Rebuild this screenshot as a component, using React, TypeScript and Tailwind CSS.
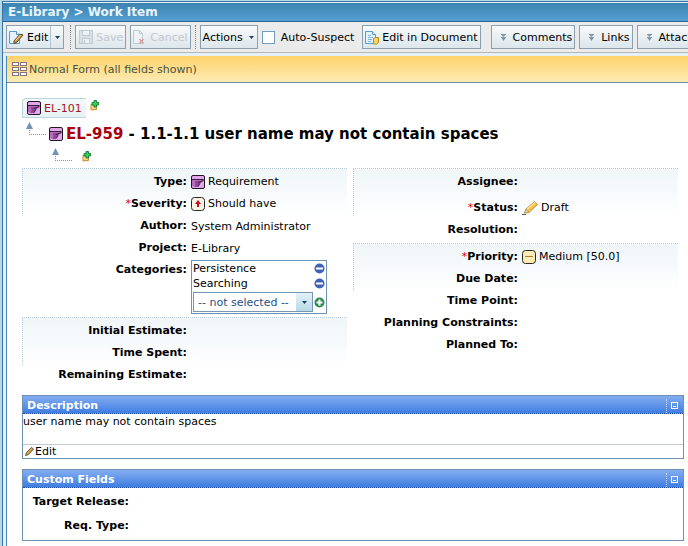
import type { ReactNode } from "react";

function RequirementIcon() {
  return (
    <svg width="14" height="14" viewBox="0 0 14 14" className="shrink-0" aria-hidden="true">
      <rect x="0.5" y="0.5" width="13" height="13" rx="1.500" fill="#e3a6ea" stroke="#1f1626" />
      <path d="M1 4.500h11.500v2L8.500 8v2.500L6 12H3L1 10.500z" fill="#b868bd" />
      <path d="M1 4.500h11.500M12.500 5.500L7 7.500" stroke="#3a1a40" />
      <path d="M4 7h5.500M4.500 9h4.500M4 11h3.500" stroke="#4d2152" strokeWidth="0.900" />
      <path d="M9.500 7.500L7 11.500" stroke="#4d2152" strokeWidth="0.900" />
    </svg>
  );
}

function AddItemIcon() {
  return (
    <svg width="9" height="11" viewBox="0 0 9 11" className="shrink-0" aria-hidden="true">
      <path d="M1 4.500h5.500v5H5L1 10z" fill="#f6d77c" stroke="#c58a35" />
      <path d="M4 0.500h2.500v2h2v2.500h-2v2H4V5H2V2.500h2z" fill="#3ccb5c" stroke="#0b7d32" strokeWidth="0.900" />
    </svg>
  );
}

function TreeConnector() {
  return (
    <svg width="21" height="14" viewBox="0 0 21 14" className="shrink-0" aria-hidden="true">
      <path d="M3.500 0L7 7H0z" fill="#7292b8" />
      <path d="M3.500 8v5" stroke="#8294a8" strokeDasharray="1 1" />
      <path d="M3 12.500h17" stroke="#8294a8" strokeDasharray="1 1" />
    </svg>
  );
}

function PageShape() {
  return (
    <>
      <path d="M0.500 1.500h7l3 3v9h-10z" fill="#e3f3fd" stroke="#5b9bca" />
      <path d="M7.500 1.500v3h3" fill="#fff" stroke="#5b9bca" />
    </>
  );
}

function EditPageIcon() {
  return (
    <svg width="15" height="15" viewBox="0 0 15 15" className="shrink-0" aria-hidden="true">
      <PageShape />
      <path d="M5 11l6-7 3 1-6 7-3 1.500z" fill="#d99b3f" stroke="#4b3517" strokeWidth="0.900" />
      <path d="M6.500 10.500l5-5.500" stroke="#f6d68c" />
    </svg>
  );
}

function SaveIcon() {
  return (
    <svg width="14" height="14" viewBox="0 0 14 14" className="shrink-0" aria-hidden="true">
      <rect x="0.500" y="0.500" width="13" height="13" fill="#d9e1e5" stroke="#c0cbd1" />
      <rect x="3.500" y="0.500" width="7" height="5" fill="#eef2f4" stroke="#c0cbd1" />
      <rect x="3.500" y="8.500" width="7" height="5" fill="#eef2f4" stroke="#c0cbd1" />
      <path d="M5.500 10v3" stroke="#b7c3ca" />
    </svg>
  );
}

function CancelIcon() {
  return (
    <svg width="14" height="15" viewBox="0 0 14 15" className="shrink-0" aria-hidden="true">
      <path d="M1.500 0.500h6l3 3v10h-9z" fill="#eef2f4" stroke="#bccad2" />
      <path d="M7.500 0.500v3h3" fill="none" stroke="#bccad2" />
      <path d="M7.500 9l4 4.500M11.500 9l-4 4.500" stroke="#dc9ca4" strokeWidth="1.500" />
    </svg>
  );
}

function DocumentIcon() {
  return (
    <svg width="15" height="15" viewBox="0 0 15 15" className="shrink-0" aria-hidden="true">
      <PageShape />
      <path d="M3 5.500h3M3 7.500h5M3 9.500h4M3 11.500h3" stroke="#7db7dd" />
      <path d="M8.500 8.500l2-1h3v5l-2 1.500h-3z" fill="#fbd75c" stroke="#b88a1c" />
    </svg>
  );
}

function FormIcon() {
  return (
    <svg width="15" height="14" viewBox="0 0 15 14" className="shrink-0" aria-hidden="true">
      <g fill="#fff" stroke="#84727a">
        <rect x="0.500" y="0.500" width="6" height="3" />
        <rect x="8.500" y="0.500" width="6" height="3" />
        <rect x="0.500" y="5.500" width="6" height="3" />
        <rect x="8.500" y="5.500" width="6" height="3" />
        <rect x="0.500" y="10.500" width="6" height="3" />
        <rect x="8.500" y="10.500" width="6" height="3" />
      </g>
    </svg>
  );
}

function JumpIcon() {
  return (
    <svg width="5" height="7" viewBox="0 0 5 7" className="shrink-0" aria-hidden="true">
      <path d="M0 0.500h5M0 3.500h5" stroke="#8296aa" />
      <path d="M0.500 1h4l-2 2zM0.500 4h4l-2 3z" fill="#8296aa" />
    </svg>
  );
}

function ArrowDown() {
  return (
    <svg width="5" height="3" viewBox="0 0 5 3" className="shrink-0" aria-hidden="true">
      <path d="M0 0h5L2.500 3z" fill="#1d3f57" />
    </svg>
  );
}

function SeverityIcon() {
  return (
    <svg width="14" height="14" viewBox="0 0 14 14" className="shrink-0" aria-hidden="true">
      <rect x="0.500" y="0.500" width="13" height="13" rx="3" fill="#fbf3e6" stroke="#2b2622" />
      <path d="M7 3l3 4H8v3H6V7H4z" fill="#c60f1c" />
    </svg>
  );
}

function PriorityIcon() {
  return (
    <svg width="14" height="14" viewBox="0 0 14 14" className="shrink-0" aria-hidden="true">
      <rect x="0.500" y="0.500" width="13" height="13" rx="3" fill="#fdebb4" stroke="#2b2622" />
      <path d="M3 6.500h8" stroke="#a8823c" />
    </svg>
  );
}

function DraftIcon() {
  return (
    <svg width="16" height="14" viewBox="0 0 16 14" className="shrink-0" aria-hidden="true">
      <path d="M0 13.500h4" stroke="#6b5a43" />
      <path d="M2.500 12l1.500-4 8.500-7.500 3 3-8.500 8z" fill="#f4c04a" stroke="#b98127" strokeWidth="0.800" />
      <path d="M5 8.500l8-7" stroke="#fce6a0" strokeWidth="1.500" />
      <path d="M2.500 12L4 8l3 3.500z" fill="#efdcb8" stroke="#8a6a3a" strokeWidth="0.500" />
    </svg>
  );
}

function SmallPencilIcon() {
  return (
    <svg width="9" height="9" viewBox="0 0 9 9" className="shrink-0" aria-hidden="true">
      <path d="M0.500 8.500l1-3 5-5 2 1.500-5 5.500z" fill="#d9a55a" stroke="#5f431f" strokeWidth="0.900" />
    </svg>
  );
}

function RoundIcon({ plus = false }: { plus?: boolean }) {
  return (
    <svg width="11" height="11" viewBox="0 0 11 11" className="shrink-0" aria-hidden="true">
      <circle cx="5.500" cy="5.500" r="5" fill={plus ? "#2f8a50" : "#3f63bd"} />
      <path d={plus ? "M2.500 5.500h6M5.500 2.500v6" : "M2 5.500h7"} stroke="#fff" strokeWidth="2" />
    </svg>
  );
}

const buttonFace =
  "flex h-6 shrink-0 items-center border border-[#8b9fae] bg-linear-to-b from-[#f7fafb] to-[#dce6eb]";

function Divider() {
  return <span className="h-6 shrink-0 border-l border-dotted border-[#7c8890]" />;
}

function JumpButton({ children }: { children: ReactNode }) {
  return (
    <button type="button" className={`${buttonFace} gap-[7px] pr-0.5 pl-[9px]`}>
      <JumpIcon />
      {children}
    </button>
  );
}

function Group({ children, className = "" }: { children: ReactNode; className?: string }) {
  return (
    <div className={`relative isolate pt-[3px] ${className}`}>
      <span className="absolute inset-x-0 top-0 -z-10 h-12 border-t border-l border-dotted border-[#b9ced8] bg-linear-to-b from-[#eff5f8] to-white" />
      <dl>{children}</dl>
    </div>
  );
}

function Field({
  label,
  required = false,
  plain = false,
  className = "",
  children,
}: {
  label: string;
  required?: boolean;
  plain?: boolean;
  className?: string;
  children?: ReactNode;
}) {
  return (
    <div className={`flex min-h-[22px] items-start gap-1 ${className}`}>
      <dt className="w-[165px] shrink-0 text-right leading-[22px] font-bold">
        {required && <span className="font-normal text-[#e00000]">*</span>}
        {label}:
      </dt>
      <dd className={`flex items-center gap-[3px] ${plain ? "pt-0.5 leading-5" : "leading-[22px]"}`}>{children}</dd>
    </div>
  );
}

function Panel({ title, children }: { title: string; children: ReactNode }) {
  return (
    <section className="border border-[#6f8fb5]">
      <header className="flex h-[18px] items-center justify-between border-b border-dotted border-[#1c4c9c] bg-linear-to-b from-[#84adf0] to-[#3f7de2] pt-0.5 pr-[5px] pl-1">
        <h2 className="font-bold text-white">{title}</h2>
        <button
          type="button"
          aria-label={`Collapse ${title}`}
          className="flex h-3.5 items-center border-l border-dotted border-[#c5daf8] pl-1"
        >
          <svg width="7" height="7" viewBox="0 0 7 7" aria-hidden="true">
            <rect x="0.500" y="0.500" width="6" height="6" fill="none" stroke="#fff" />
            <path d="M2 4.500h3" stroke="#fff" />
          </svg>
        </button>
      </header>
      {children}
    </section>
  );
}

export default function App() {
  return (
    <div className="flex min-h-screen flex-col overflow-hidden bg-[#b4daea] pt-px pl-0.5 font-['DejaVu_Sans',Verdana,sans-serif] text-[11px] leading-[15px] whitespace-nowrap text-black">
      <div className="flex grow flex-col border-t border-l border-[#3b71a3] bg-[#e4f0f6] pt-px">
        <header className="flex h-[19px] items-center border-b border-[#2a6693] bg-linear-to-b from-[#3b83ae] to-[#559ed2] pl-[5px]">
          <h1 className="text-xs leading-[15px] font-bold text-[#e8f6ff]">E-Library &gt; Work Item</h1>
        </header>

        <div className="flex h-[31px] items-center border-b border-[#b6b6b6] bg-[#ebebeb] pl-[3px]">
          <div className={buttonFace}>
            <button type="button" className="flex h-full items-center gap-[3px] pr-0.5 pl-0.5">
              <EditPageIcon />
              Edit
            </button>
            <button
              type="button"
              aria-label="More edit options"
              className="flex h-full w-[13px] items-center justify-center border-l border-[#b4c2cc]"
            >
              <ArrowDown />
            </button>
          </div>
          <div className="ml-1.5 flex items-center gap-1">
            <Divider />
            <button type="button" disabled className={`${buttonFace} gap-[3px] pr-0.5 pl-[3px] text-[#c3c8cb]`}>
              <SaveIcon />
              Save
            </button>
            <button type="button" disabled className={`${buttonFace} gap-1 pr-0.5 pl-px text-[#c3c8cb]`}>
              <CancelIcon />
              Cancel
            </button>
            <Divider />
            <button type="button" className={`${buttonFace} gap-1.5 pr-[3px] pl-0.5`}>
              Actions
              <ArrowDown />
            </button>
            <label className="flex items-center gap-1.5">
              <input
                type="checkbox"
                className="size-[13px] shrink-0 appearance-none border border-[#6f9bbd] bg-white checked:bg-[#6f9bbd]"
              />
              Auto-Suspect
            </label>
          </div>
          <div className="ml-2 flex items-center gap-2.5">
            <button type="button" className={`${buttonFace} gap-0.5 px-0.5`}>
              <DocumentIcon />
              Edit in Document
            </button>
            <div className="flex gap-1">
              <JumpButton>Comments</JumpButton>
              <JumpButton>Links</JumpButton>
              <JumpButton>Attachments</JumpButton>
            </div>
          </div>
        </div>

        <div className="mt-[3px] ml-[3px] flex grow flex-col border-l border-[#4a86b8] bg-white">
          <div className="flex h-[27px] items-center gap-0.5 border-b border-[#6e8f9c] bg-linear-to-b from-[#fdd268] to-[#feebb2] pl-[5px] text-[#48503c]">
            <FormIcon />
            Normal Form (all fields shown)
          </div>

          <main className="pt-[15px] pr-1 pb-1.5 pl-[15px]">
            <div className="flex items-start gap-1">
              <a
                href="#el-101"
                className="flex h-5 items-center gap-[3px] rounded-tl-sm border border-r-0 border-[#bcd4de] bg-linear-to-b from-[#f4f9fa] to-[#e8f1f4] pr-1 pl-1 text-[#a8141c]"
              >
                <RequirementIcon />
                EL-101
              </a>
              <button type="button" aria-label="Add child to EL-101" className="mt-0.5">
                <AddItemIcon />
              </button>
            </div>
            <div className="flex h-[30px] items-start gap-0.5 pt-1 pl-1">
              <TreeConnector />
              <div className="flex items-center gap-[3px] pt-0.5">
                <RequirementIcon />
                <h2 className="text-[15px] leading-5 font-bold">
                  <span className="text-[#a8000c]">EL-959</span> - 1.1-1.1 user name may not contain spaces
                </h2>
              </div>
            </div>
            <div className="flex h-5 items-start gap-[9px] pl-[30px]">
              <TreeConnector />
              <button type="button" aria-label="Add child to EL-959" className="mt-[3px]">
                <AddItemIcon />
              </button>
            </div>

            <div className="grid grid-cols-2 gap-1.5 pr-1.5">
              <div className="space-y-[3px]">
                <Group>
                  <Field label="Type">
                    <RequirementIcon />
                    Requirement
                  </Field>
                  <Field label="Severity" required>
                    <SeverityIcon />
                    Should have
                  </Field>
                  <Field label="Author" plain>
                    System Administrator
                  </Field>
                  <Field label="Project" plain>
                    E-Library
                  </Field>
                  <Field label="Categories">
                    <div className="mt-px w-[136px] border border-[#6f93b8] bg-white px-px pb-px leading-[15px]">
                      <div className="flex items-center justify-between">
                        Persistence
                        <button type="button" aria-label="Remove Persistence">
                          <RoundIcon />
                        </button>
                      </div>
                      <div className="flex items-center justify-between">
                        Searching
                        <button type="button" aria-label="Remove Searching">
                          <RoundIcon />
                        </button>
                      </div>
                      <div className="mt-px flex items-center justify-between">
                        <div className="relative">
                          <select
                            aria-label="Add category"
                            className="h-5 w-[120px] appearance-none border border-[#7796b4] bg-white pl-1 text-[#1f4f82]"
                          >
                            <option>-- not selected --</option>
                          </select>
                          <span className="pointer-events-none absolute top-px right-px flex h-[18px] w-4 items-center justify-center bg-linear-to-b from-[#e3f3f9] to-[#b5d9e6]">
                            <ArrowDown />
                          </span>
                        </div>
                        <button type="button" aria-label="Add selected category">
                          <RoundIcon plus />
                        </button>
                      </div>
                    </div>
                  </Field>
                </Group>
                <Group>
                  <Field label="Initial Estimate" />
                  <Field label="Time Spent" />
                  <Field label="Remaining Estimate" />
                </Group>
              </div>

              <div>
                <Group className="pb-0.5">
                  <Field label="Assignee" />
                  <Field label="Status" required className="pt-1">
                    <DraftIcon />
                    Draft
                  </Field>
                  <Field label="Resolution" />
                </Group>
                <Group>
                  <Field label="Priority" required>
                    <PriorityIcon />
                    Medium [50.0]
                  </Field>
                  <Field label="Due Date" />
                  <Field label="Time Point" />
                  <Field label="Planning Constraints" />
                  <Field label="Planned To" />
                </Group>
              </div>
            </div>

            <div className="mt-[9px] space-y-2.5">
              <Panel title="Description">
                <p className="h-[30px]">user name may not contain spaces</p>
                <div className="border-t border-[#c3c8ce] pl-0.5">
                  <button type="button" className="flex h-[13px] items-center gap-px">
                    <SmallPencilIcon />
                    Edit
                  </button>
                </div>
              </Panel>
              <Panel title="Custom Fields">
                <dl className="space-y-0.5 pt-0.5 pb-1 font-bold">
                  <div className="flex h-[22px] items-center">
                    <dt className="w-[106px] text-right">Target Release:</dt>
                    <dd />
                  </div>
                  <div className="flex h-[22px] items-center">
                    <dt className="w-[106px] text-right">Req. Type:</dt>
                    <dd />
                  </div>
                </dl>
              </Panel>
            </div>
          </main>
        </div>
      </div>
    </div>
  );
}
